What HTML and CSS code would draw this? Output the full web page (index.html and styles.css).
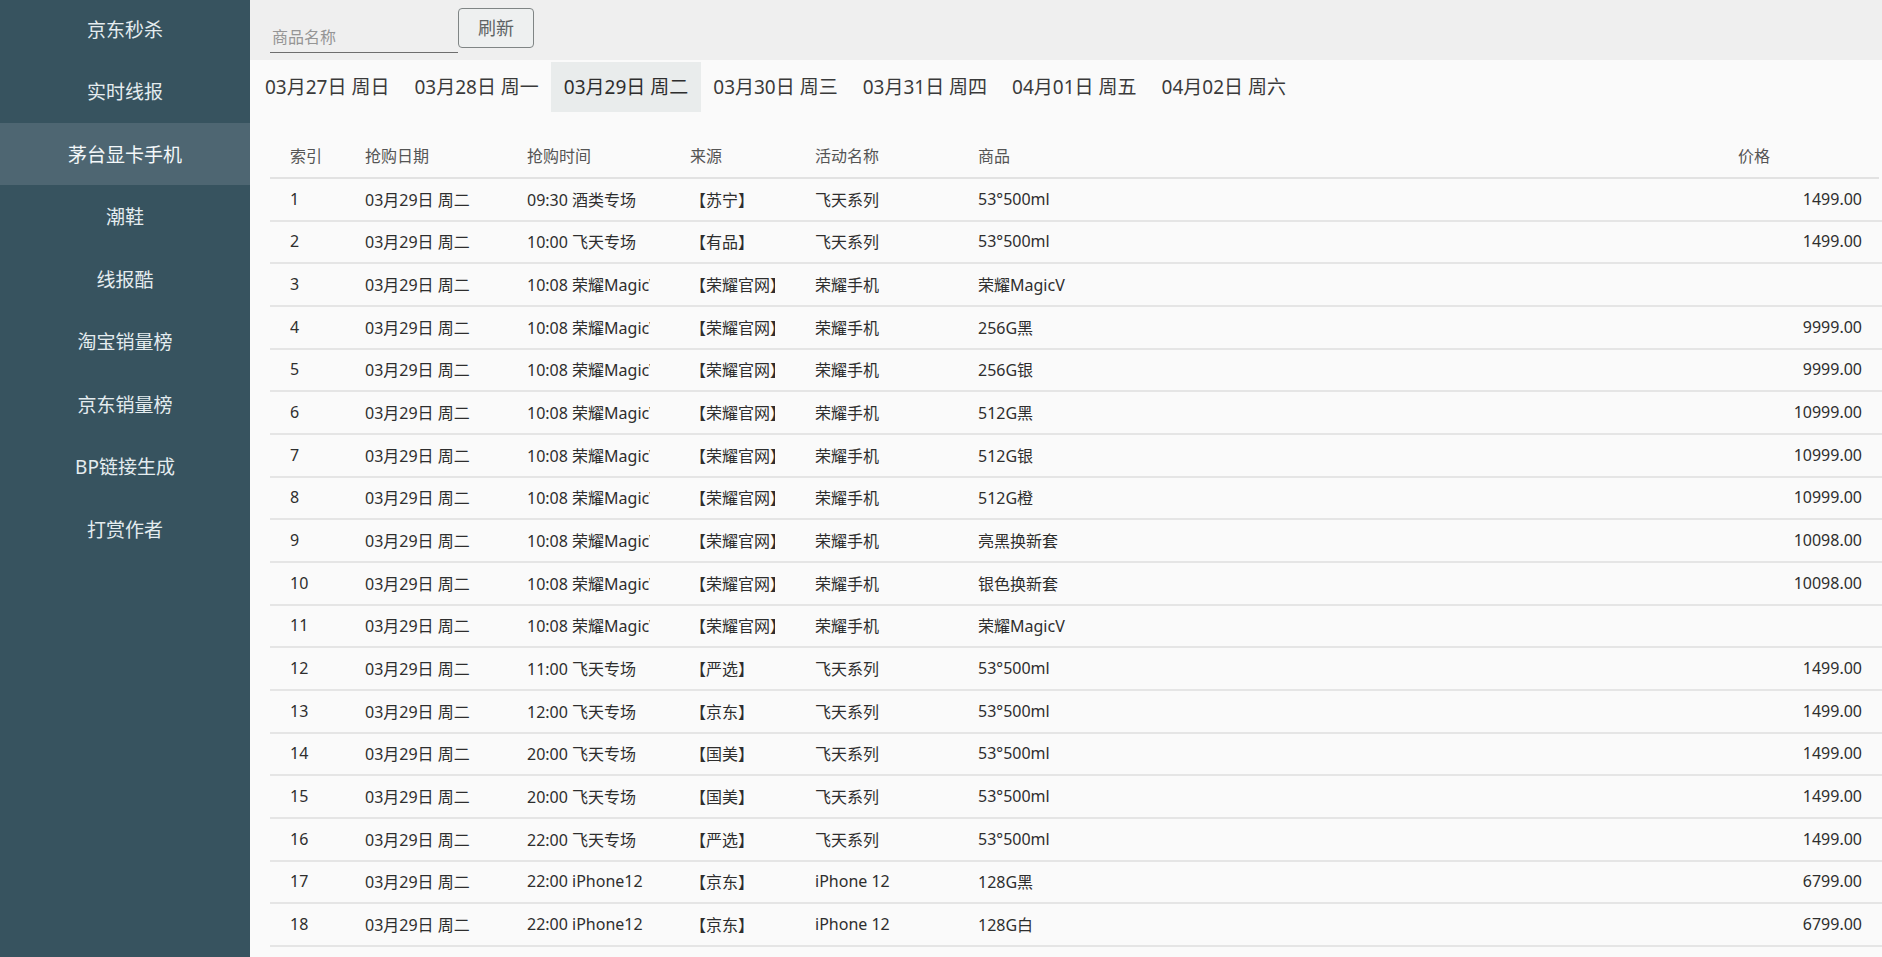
FILE: index.html
```html
<!DOCTYPE html>
<html lang="zh-CN">
<head>
<meta charset="utf-8">
<title>茅台显卡手机</title>
<link rel="stylesheet" href="styles.css">
</head>
<body>
<div class="app">
  <nav class="sidebar">
    <ul class="menu">
      <li class="menu-item">京东秒杀</li>
      <li class="menu-item">实时线报</li>
      <li class="menu-item active">茅台显卡手机</li>
      <li class="menu-item">潮鞋</li>
      <li class="menu-item">线报酷</li>
      <li class="menu-item">淘宝销量榜</li>
      <li class="menu-item">京东销量榜</li>
      <li class="menu-item">BP链接生成</li>
      <li class="menu-item">打赏作者</li>
    </ul>
  </nav>
  <main class="main">
    <div class="toolbar">
      <input class="search" type="text" placeholder="商品名称">
      <button class="btn" type="button">刷新</button>
    </div>
    <div class="tabs">
      <div class="tab">03月27日 周日</div>
      <div class="tab">03月28日 周一</div>
      <div class="tab active">03月29日 周二</div>
      <div class="tab">03月30日 周三</div>
      <div class="tab">03月31日 周四</div>
      <div class="tab">04月01日 周五</div>
      <div class="tab">04月02日 周六</div>
    </div>
    <div class="table">
      <div class="row head">
        <div class="cell">索引</div>
        <div class="cell">抢购日期</div>
        <div class="cell">抢购时间</div>
        <div class="cell">来源</div>
        <div class="cell">活动名称</div>
        <div class="cell">商品</div>
        <div class="cell">价格</div>
      </div>
      <div class="body">
        <div class="row"><div class="cell">1</div><div class="cell">03月29日 周二</div><div class="cell">09:30 酒类专场</div><div class="cell">【苏宁】</div><div class="cell">飞天系列</div><div class="cell">53°500ml</div><div class="cell price">1499.00</div></div>
        <div class="row"><div class="cell">2</div><div class="cell">03月29日 周二</div><div class="cell">10:00 飞天专场</div><div class="cell">【有品】</div><div class="cell">飞天系列</div><div class="cell">53°500ml</div><div class="cell price">1499.00</div></div>
        <div class="row"><div class="cell">3</div><div class="cell">03月29日 周二</div><div class="cell">10:08 荣耀MagicV</div><div class="cell">【荣耀官网】</div><div class="cell">荣耀手机</div><div class="cell">荣耀MagicV</div><div class="cell price"></div></div>
        <div class="row"><div class="cell">4</div><div class="cell">03月29日 周二</div><div class="cell">10:08 荣耀MagicV</div><div class="cell">【荣耀官网】</div><div class="cell">荣耀手机</div><div class="cell">256G黑</div><div class="cell price">9999.00</div></div>
        <div class="row"><div class="cell">5</div><div class="cell">03月29日 周二</div><div class="cell">10:08 荣耀MagicV</div><div class="cell">【荣耀官网】</div><div class="cell">荣耀手机</div><div class="cell">256G银</div><div class="cell price">9999.00</div></div>
        <div class="row"><div class="cell">6</div><div class="cell">03月29日 周二</div><div class="cell">10:08 荣耀MagicV</div><div class="cell">【荣耀官网】</div><div class="cell">荣耀手机</div><div class="cell">512G黑</div><div class="cell price">10999.00</div></div>
        <div class="row"><div class="cell">7</div><div class="cell">03月29日 周二</div><div class="cell">10:08 荣耀MagicV</div><div class="cell">【荣耀官网】</div><div class="cell">荣耀手机</div><div class="cell">512G银</div><div class="cell price">10999.00</div></div>
        <div class="row"><div class="cell">8</div><div class="cell">03月29日 周二</div><div class="cell">10:08 荣耀MagicV</div><div class="cell">【荣耀官网】</div><div class="cell">荣耀手机</div><div class="cell">512G橙</div><div class="cell price">10999.00</div></div>
        <div class="row"><div class="cell">9</div><div class="cell">03月29日 周二</div><div class="cell">10:08 荣耀MagicV</div><div class="cell">【荣耀官网】</div><div class="cell">荣耀手机</div><div class="cell">亮黑换新套</div><div class="cell price">10098.00</div></div>
        <div class="row"><div class="cell">10</div><div class="cell">03月29日 周二</div><div class="cell">10:08 荣耀MagicV</div><div class="cell">【荣耀官网】</div><div class="cell">荣耀手机</div><div class="cell">银色换新套</div><div class="cell price">10098.00</div></div>
        <div class="row"><div class="cell">11</div><div class="cell">03月29日 周二</div><div class="cell">10:08 荣耀MagicV</div><div class="cell">【荣耀官网】</div><div class="cell">荣耀手机</div><div class="cell">荣耀MagicV</div><div class="cell price"></div></div>
        <div class="row"><div class="cell">12</div><div class="cell">03月29日 周二</div><div class="cell">11:00 飞天专场</div><div class="cell">【严选】</div><div class="cell">飞天系列</div><div class="cell">53°500ml</div><div class="cell price">1499.00</div></div>
        <div class="row"><div class="cell">13</div><div class="cell">03月29日 周二</div><div class="cell">12:00 飞天专场</div><div class="cell">【京东】</div><div class="cell">飞天系列</div><div class="cell">53°500ml</div><div class="cell price">1499.00</div></div>
        <div class="row"><div class="cell">14</div><div class="cell">03月29日 周二</div><div class="cell">20:00 飞天专场</div><div class="cell">【国美】</div><div class="cell">飞天系列</div><div class="cell">53°500ml</div><div class="cell price">1499.00</div></div>
        <div class="row"><div class="cell">15</div><div class="cell">03月29日 周二</div><div class="cell">20:00 飞天专场</div><div class="cell">【国美】</div><div class="cell">飞天系列</div><div class="cell">53°500ml</div><div class="cell price">1499.00</div></div>
        <div class="row"><div class="cell">16</div><div class="cell">03月29日 周二</div><div class="cell">22:00 飞天专场</div><div class="cell">【严选】</div><div class="cell">飞天系列</div><div class="cell">53°500ml</div><div class="cell price">1499.00</div></div>
        <div class="row"><div class="cell">17</div><div class="cell">03月29日 周二</div><div class="cell">22:00 iPhone12</div><div class="cell">【京东】</div><div class="cell">iPhone 12</div><div class="cell">128G黑</div><div class="cell price">6799.00</div></div>
        <div class="row"><div class="cell">18</div><div class="cell">03月29日 周二</div><div class="cell">22:00 iPhone12</div><div class="cell">【京东】</div><div class="cell">iPhone 12</div><div class="cell">128G白</div><div class="cell price">6799.00</div></div>
        <div class="row"><div class="cell">19</div><div class="cell">03月29日 周二</div><div class="cell">22:00 iPhone12</div><div class="cell">【京东】</div><div class="cell">iPhone 12</div><div class="cell">128G蓝</div><div class="cell price">6799.00</div></div>
        <div class="row"><div class="cell">20</div><div class="cell">03月29日 周二</div><div class="cell">22:00 iPhone12</div><div class="cell">【京东】</div><div class="cell">iPhone 12</div><div class="cell">128G绿</div><div class="cell price">6799.00</div></div>
        <div class="row"><div class="cell">21</div><div class="cell">03月29日 周二</div><div class="cell">22:00 iPhone12</div><div class="cell">【京东】</div><div class="cell">iPhone 12</div><div class="cell">128G红</div><div class="cell price">6799.00</div></div>
        <div class="row"><div class="cell">22</div><div class="cell">03月29日 周二</div><div class="cell">22:00 iPhone12</div><div class="cell">【京东】</div><div class="cell">iPhone 12</div><div class="cell">256G黑</div><div class="cell price">7599.00</div></div>
        <div class="row"><div class="cell">23</div><div class="cell">03月29日 周二</div><div class="cell">22:00 iPhone12</div><div class="cell">【京东】</div><div class="cell">iPhone 12</div><div class="cell">256G白</div><div class="cell price">7599.00</div></div>
        <div class="row"><div class="cell">24</div><div class="cell">03月29日 周二</div><div class="cell">22:00 飞天专场</div><div class="cell">【苏宁】</div><div class="cell">飞天系列</div><div class="cell">53°500ml</div><div class="cell price">1499.00</div></div>
        <div class="row"><div class="cell">25</div><div class="cell">03月29日 周二</div><div class="cell">22:00 飞天专场</div><div class="cell">【有品】</div><div class="cell">飞天系列</div><div class="cell">53°500ml</div><div class="cell price">1499.00</div></div>
      </div>
    </div>
  </main>
</div>
</body>
</html>
```

FILE: styles.css
```css
* { box-sizing: border-box; }

html, body {
  margin: 0;
  padding: 0;
  height: 100%;
  overflow: hidden;
}

body {
  font-family: "Noto Sans", "Noto Sans CJK SC", sans-serif;
  background: #fafafa;
  color: #2e2e2e;
}

.app {
  display: flex;
  height: 100vh;
}

.sidebar {
  width: 250px;
  flex: none;
  background: #37535f;
  overflow: hidden;
}

.menu {
  list-style: none;
  margin: -2.5px 0 0;
  padding: 0;
}

.menu-item {
  height: 62.5px;
  display: flex;
  align-items: center;
  justify-content: center;
  font-size: 19px;
  color: #e4ecef;
}

.menu-item.active {
  background: #4e6672;
  color: #f4f8fa;
}

.main {
  flex: 1;
  min-width: 0;
  display: flex;
  flex-direction: column;
  background: #fafafa;
}

.toolbar {
  height: 60px;
  flex: none;
  background: #efefef;
  display: flex;
  align-items: flex-start;
  padding: 8px 0 0 20px;
}

.search {
  width: 188px;
  height: 33px;
  margin-top: 12px;
  padding: 2px 2px 0;
  border: none;
  border-bottom: 1px solid #6e6e6e;
  background: transparent;
  font-family: inherit;
  font-size: 16px;
  color: #333;
  outline: none;
}

.search::placeholder {
  color: #959595;
}

.btn {
  width: 76px;
  height: 40px;
  border: 1px solid #808585;
  border-radius: 4px;
  background: #eef0f0;
  font-family: inherit;
  font-size: 18px;
  color: #5e6464;
  padding: 0 0 3px;
}

.tabs {
  flex: none;
  display: flex;
  height: 50px;
  margin-top: 2px;
  padding-left: 2.5px;
}

.tab {
  display: flex;
  align-items: center;
  padding: 0 12.5px 2px;
  font-size: 19px;
  color: #3a3a3a;
  white-space: nowrap;
}

.tab.active {
  background: #e9ecec;
  color: #2e2e2e;
}

.table {
  flex: 1;
  min-height: 0;
  display: flex;
  flex-direction: column;
  margin: 21px 0 0 20px;
}

.row {
  display: grid;
  grid-template-columns: 35px 122px 123px 85px 123px 1fr 121px;
  column-gap: 40px;
  align-items: center;
  padding: 0 20px;
  height: 42.67px;
  border-bottom: 2px solid #e5e5e5;
  font-size: 16px;
  color: #2e2e2e;
}

.row.head {
  flex: none;
  height: 46px;
  border-bottom: 2px solid #e2e2e2;
  color: #555;
  margin-right: 3px;
}

.cell {
  white-space: nowrap;
  overflow: hidden;
  padding-bottom: 1px;
}

.cell.price {
  text-align: right;
}

.row.head .cell:last-child {
  text-align: left;
}

.body {
  flex: 1;
  min-height: 0;
  overflow-y: auto;
}

.body::-webkit-scrollbar {
  width: 3px;
}

.body::-webkit-scrollbar-track {
  background: transparent;
  margin-top: 21px;
}

.body::-webkit-scrollbar-thumb {
  background: #c4c4c4;
  border-radius: 0;
}
```
